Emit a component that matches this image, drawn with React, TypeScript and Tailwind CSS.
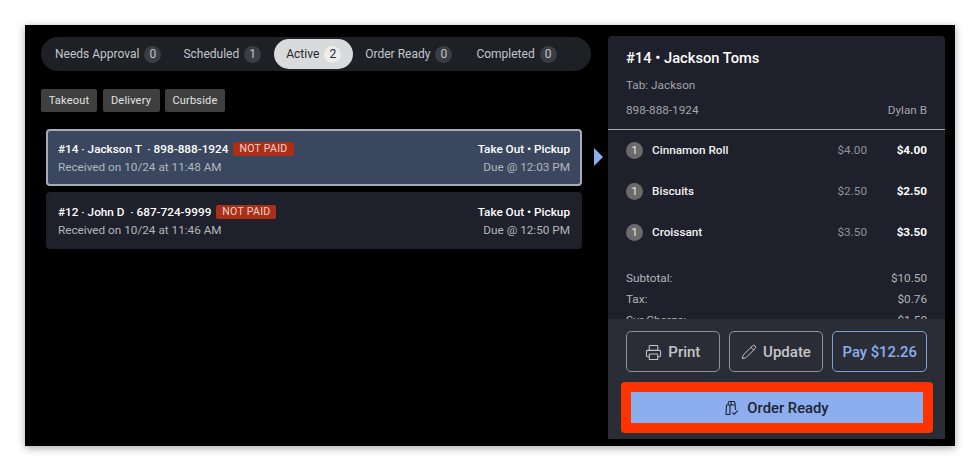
import { Pencil, Printer } from "lucide-react";

const tabs = [
    { label: "Needs Approval", count: 0, space: "mr-[2px]" },
    { label: "Scheduled", count: 1, space: "mr-[3px]" },
    { label: "Active", count: 2, active: true, space: "mr-[2px]" },
    { label: "Order Ready", count: 0, space: "mr-[4px]" },
    { label: "Completed", count: 0, space: "" },
];

const orders = [
    { head: "#14 · Jackson T  · 898-888-1924", received: "Received on 10/24 at 11:48 AM", due: "Due @ 12:03 PM", selected: true },
    { head: "#12 · John D  · 687-724-9999", received: "Received on 10/24 at 11:46 AM", due: "Due @ 12:50 PM", selected: false },
];

const items = [
    { name: "Cinnamon Roll", price: "$4.00" },
    { name: "Biscuits", price: "$2.50" },
    { name: "Croissant", price: "$3.50" },
];

function BagCheck() {
    return (
        <svg width="14" height="16" viewBox="0 0 14 16" fill="none" stroke="#1f2430" strokeWidth="1.1">
            <path d="M1.5 5h8.5l.7 5M1.5 5L1 14.5h4V5" />
            <path d="M3.2 5V3a1.5 1.5 0 0 1 3 0v2" />
            <path d="M5 1.5h3.5A1.5 1.5 0 0 1 10 3v2" />
            <path d="M7.5 12.5l1.7 1.7 3.6-3.6" />
        </svg>
    );
}

export default function App() {
    return (
        <div className="w-[980px] h-[471px] bg-white pt-[25px] pl-[25px] overflow-hidden font-['Roboto',sans-serif]">
            <div className="w-[930px] h-[421px] bg-black flex shadow-[0_2px_8px_rgba(0,0,0,0.35)]">
                {/* Left side */}
                <div className="w-[569px] pl-4 pt-[12px] shrink-0">
                    <div className="w-[550px] h-[34px] rounded-full bg-[#1d2025] flex items-center pl-[4px] text-[12px] text-[#c4c6ca]">
                        {tabs.map((t) => (
                            <div
                                key={t.label}
                                className={(t.active
                                    ? "h-[30px] px-[12px] rounded-full bg-[#d9dadb] text-[#24272c] flex items-center gap-[5px] "
                                    : "h-[30px] px-[10px] flex items-center gap-[5px] ") + t.space}
                            >
                                {t.label}
                                <span className={t.active
                                    ? "w-[17px] h-[17px] rounded-full bg-[#eceded] flex items-center justify-center"
                                    : "w-[17px] h-[17px] rounded-full bg-[#3a3d42] flex items-center justify-center"}>
                                    {t.count}
                                </span>
                            </div>
                        ))}
                    </div>

                    <div className="flex gap-[5.5px] mt-[18px] text-[11px] tracking-[0.2px] text-[#e2e2e2]">
                        <div className="w-[56px] h-[23px] rounded-[2px] bg-[#3f3f3f] flex items-center justify-center pt-[1px]">Takeout</div>
                        <div className="w-[57px] h-[23px] rounded-[2px] bg-[#3f3f3f] flex items-center justify-center pt-[1px]">Delivery</div>
                        <div className="w-[60px] h-[23px] rounded-[2px] bg-[#3f3f3f] flex items-center justify-center pt-[1px]">Curbside</div>
                    </div>

                    <div className="ml-[5px] mt-[17px] w-[536px] flex flex-col gap-[6px]">
                        {orders.map((o) => (
                            <div
                                key={o.head}
                                className={o.selected
                                    ? "h-[57px] rounded-[4px] bg-[#3a475f] border-2 border-[#a6adb8] px-[10px] flex justify-between items-center text-[11.75px] leading-[18px]"
                                    : "h-[57px] rounded-[4px] bg-[#1e202b] border-2 border-[#1e202b] px-[10px] flex justify-between items-center text-[11.75px] leading-[18px]"}
                            >
                                <div>
                                    <div className="flex items-center gap-[5px] h-[18px] font-medium text-white whitespace-pre">
                                        {o.head}
                                        <span className="h-[14px] px-[6px] rounded-[2px] bg-[#ab2f17] text-[#f0d5cf] text-[10.5px] font-normal tracking-[0.3px] flex items-center">NOT PAID</span>
                                    </div>
                                    <div className="text-[#b3b6bc]">{o.received}</div>
                                </div>
                                <div className="text-right">
                                    <div className="h-[18px] font-medium text-white">Take Out • Pickup</div>
                                    <div className="text-[#b3b6bc]">{o.due}</div>
                                </div>
                            </div>
                        ))}
                    </div>
                </div>

                {/* Arrow */}
                <div className="w-0 h-0 mt-[123px] border-y-[9px] border-y-transparent border-l-[9px] border-l-[#8daeee] shrink-0" />

                {/* Order panel */}
                <div className="ml-[5px] w-[337px] h-[403px] mt-[11px] rounded-t-[4px] bg-[#1e202b] flex flex-col overflow-hidden">
                    <div className="flex-1 overflow-hidden">
                        <div className="h-[94px] px-[18px] pt-[12px] border-b-[1.5px] border-[#a9abaf]">
                            <div className="text-[14.7px] font-medium text-white leading-[20px]">#14 • Jackson Toms</div>
                            <div className="text-[11.75px] text-[#a3a5aa] mt-[9px] leading-[16px]">Tab: Jackson</div>
                            <div className="text-[11.75px] text-[#a3a5aa] mt-[9px] leading-[16px] flex justify-between">
                                <span>898-888-1924</span>
                                <span>Dylan B</span>
                            </div>
                        </div>
                        <div className="px-[18px]">
                            {items.map((it) => (
                                <div key={it.name} className="h-[41px] flex items-center text-[11.75px]">
                                    <span className="w-[17px] h-[17px] rounded-full bg-[#6a6a6a] text-[#e6e6e6] flex items-center justify-center">1</span>
                                    <span className="ml-[9px] flex-1 font-medium text-[#f1f1f1]">{it.name}</span>
                                    <span className="text-[#8f929a] w-[40px] text-right">{it.price}</span>
                                    <span className="w-[60px] text-right font-bold text-white">{it.price}</span>
                                </div>
                            ))}
                            <div className="mt-[15px] text-[11.75px] text-[#b3b5ba] leading-[21px]">
                                <div className="flex justify-between"><span>Subtotal:</span><span>$10.50</span></div>
                                <div className="flex justify-between"><span>Tax:</span><span>$0.76</span></div>
                                <div className="flex justify-between"><span>Sur Charge:</span><span>$1.50</span></div>
                            </div>
                        </div>
                    </div>
                    <div className="h-[120px] shrink-0 bg-[#2a2d36] px-[13px] pt-[12px]">
                        <div className="px-[5px] flex gap-[9px]">
                            <div className="w-[94px] h-[41px] pt-[1px] rounded-[5px] border border-[#8f9195] text-[#c4c5c8] text-[15px] font-medium flex items-center justify-center gap-[6px]">
                                <Printer size={17} strokeWidth={1.5} /> Print
                            </div>
                            <div className="w-[95px] h-[41px] pt-[1px] rounded-[5px] border border-[#8f9195] text-[#c4c5c8] text-[15px] font-medium flex items-center justify-center gap-[6px]">
                                <Pencil size={16} strokeWidth={1.5} /> Update
                            </div>
                            <div className="w-[95px] h-[41px] pt-[1px] rounded-[5px] border border-[#7f9fdc] text-[#8daeee] text-[14.8px] font-medium flex items-center justify-center">
                                Pay $12.26
                            </div>
                        </div>
                        <div className="mt-[10px] w-[312px] h-[51px] rounded-[4px] bg-[#ff3300] p-[10px]">
                            <div className="h-full pt-[1px] bg-[#8daeee] flex items-center justify-center gap-[8px] text-[#1f2430] text-[14.8px] font-medium">
                                <BagCheck /> Order Ready
                            </div>
                        </div>
                    </div>
                </div>
            </div>
        </div>
    );
}
